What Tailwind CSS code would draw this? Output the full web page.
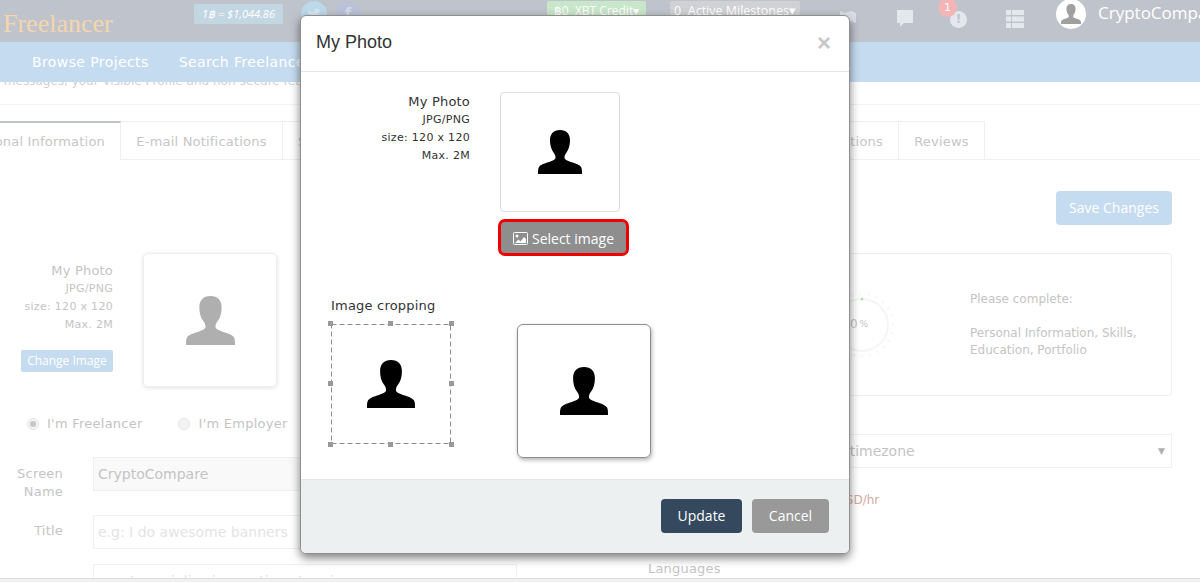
<!DOCTYPE html>
<html lang="en">
<head>
    <meta charset="UTF-8">
    <title>My Photo</title>
    <script src="https://cdn.jsdelivr.net/npm/@tailwindcss/browser@4"></script>
</head>
<body class="bg-white">

    <svg class="hidden">
        <symbol id="person" viewBox="0 0 44 44">
            <path d="M22 0C28.500 0 32 4 32 10C32 15 31 19 28.500 22.500C27 24.500 26.500 26 26.500 27.500C26.500 29.500 29 30.500 33 32C38 33.500 42 35 43 37C44 38.500 44 41 44 44L0 44C0 41 0 38.500 1 37C2 35 6 33.500 11 32C15 30.500 17.500 29.500 17.500 27.500C17.500 26 17 24.500 15.500 22.500C13 19 12 15 12 10C12 4 15.500 0 22 0Z"/>
        </symbol>
    </svg>

    <div class="relative w-[1200px] h-[582px] overflow-hidden font-['DejaVu_Sans',sans-serif]">

        <!-- header -->
        <header class="h-[42px] bg-[#bfc3cb] flex items-start whitespace-nowrap overflow-hidden">
            <span class="shrink-0 ml-[3px] mt-[8px] w-[110px] text-[26px] leading-[32px] text-[#f5d6ac] font-['Liberation_Serif',serif]">Freelancer</span>
            <span class="shrink-0 ml-[81px] mt-[4px] w-[89px] h-[20px] rounded-[2px] bg-[#c3d7e3] text-white text-[11px] italic leading-[20px] text-center font-['Open_Sans',sans-serif]">1฿ = $1,044.86</span>
            <span class="shrink-0 ml-[18px] mt-[1px] w-[26px] h-[26px] rounded-full bg-[#bcd9ea] flex items-center justify-center">
                <svg class="w-[14px] h-[14px]" viewBox="0 0 24 24" fill="#d5e6f0"><path d="M23 5c-.8.4-1.700.6-2.600.7.900-.6 1.600-1.400 2-2.500-.9.500-1.900.9-2.900 1.100A4.600 4.600 0 0 0 11.700 8.500 13 13 0 0 1 2.300 3.700a4.600 4.600 0 0 0 1.400 6.100c-.7 0-1.400-.2-2-.6 0 2.200 1.600 4.100 3.700 4.600-.7.200-1.400.2-2.100.1.600 1.800 2.300 3.100 4.300 3.200A9.300 9.300 0 0 1 1 19a13 13 0 0 0 20-11.600c.9-.6 1.600-1.400 2-2.400z"/></svg>
            </span>
            <span class="shrink-0 ml-[8px] mt-[1px] w-[26px] h-[26px] rounded-full bg-[#b9c2d7] text-[#d3d9e6] text-[15px] font-bold leading-[26px] text-center">f</span>
            <span class="shrink-0 ml-[186px] mt-[1px] w-[99px] h-[21px] rounded-[2px] bg-[#c8e6c9] text-white text-[12px] leading-[19px] text-center font-['Open_Sans',sans-serif]">฿0&nbsp; XBT Credit▾</span>
            <span class="shrink-0 ml-[24px] mt-[1px] w-[130px] h-[21px] rounded-[2px] bg-[#d0d1d4] text-white text-[12.5px] leading-[19px] text-center font-['Open_Sans',sans-serif]">0&nbsp; Active Milestones▾</span>
            <svg class="shrink-0 ml-[39px] mt-[10px] w-[18px] h-[14px]" viewBox="0 0 18 14" fill="#dbe0e8"><path d="M1 1l5 2 6-2 5 2v10l-5-2-6 2-5-2z"/></svg>
            <svg class="shrink-0 ml-[39px] mt-[9px] w-[18px] h-[20px]" viewBox="0 0 18 20" fill="#e4e8ee"><path d="M1 1h16v13H8l-4 4v-4H1z"/></svg>
            <div class="shrink-0 relative ml-[36px] mt-[11px] w-[17px] h-[17px] rounded-full bg-[#e4e8ee] text-[#bfc3cb] text-[12px] font-bold leading-[17px] text-center">!
                <span class="absolute -left-[12px] -top-[13px] w-[19px] h-[19px] rounded-full bg-[#f3b5b5] text-white text-[11px] font-normal leading-[19px]">1</span>
            </div>
            <svg class="shrink-0 ml-[39px] mt-[10px] w-[18px] h-[18px]" viewBox="0 0 18 18" fill="#e4e8ee"><path d="M0 0h5v5H0zM6 0h12v5H6zM0 6.500h5v5H0zM6 6.500h12v5H6zM0 13h5v5H0zM6 13h12v5H6z"/></svg>
            <span class="shrink-0 ml-[32px] -mt-[1px] w-[30px] h-[30px] rounded-full bg-white flex items-center justify-center">
                <svg class="w-[20px] h-[20px] fill-[#a0a0a0]"><use href="#person"/></svg>
            </span>
            <span class="shrink-0 ml-[12px] mt-[2px] text-white text-[17px] leading-[22px] font-['Open_Sans',sans-serif]">CryptoCompare</span>
        </header>

        <!-- nav -->
        <nav class="h-[40px] bg-[#c5dbef] flex items-center text-white text-[14px] font-medium whitespace-nowrap">
            <span class="ml-[32px] tracking-[0.4px]">Browse Projects</span>
            <span class="ml-[30px] tracking-[0.4px]">Search Freelancers</span>
        </nav>

        <div class="h-[23px] border-b border-[#f3f3f3] overflow-hidden">
            <p class="-mt-[10px] text-[12px] text-[#cfcfcf] whitespace-nowrap">&nbsp;messages, your Visible Profile and non-secure features</p>
        </div>

        <!-- tabs -->
        <div class="mt-[16px] h-[39px] border-b border-[#efefef] flex text-[13px] text-[#c6c6c6] tracking-[0.2px] whitespace-nowrap">
            <div class="w-[121px] h-[39px] border-t-2 border-t-[#bfc3cb] border-r border-r-[#efefef] bg-white flex items-center justify-end pt-[1px] pr-[15px] overflow-hidden">Personal Information</div>
            <div class="w-[162px] border-t border-r border-[#efefef] flex items-center justify-center pt-[2px]">E-mail Notifications</div>
            <div class="w-[100px] border-t border-r border-[#efefef] flex items-center pl-[15px] pt-[2px]">Settings</div>
            <div class="w-[516px] border-t border-r border-[#efefef] flex items-center justify-end pt-[2px] pr-[15px]">Notifications</div>
            <div class="w-[86px] border-t border-r border-[#efefef] flex items-center justify-center pt-[2px]">Reviews</div>
        </div>

        <!-- form behind the dialog -->
        <main class="flex">
            <div class="w-[517px] pt-[93px] shrink-0">
                <div class="flex">
                    <div class="w-[113px] pt-[9px] text-right text-[11px] tracking-[0.3px] leading-[18px] text-[#c4c4c4] whitespace-nowrap">
                        <p class="text-[13px] tracking-[0.2px]">My Photo</p>
                        <p>JPG/PNG</p>
                        <p>size: 120 x 120</p>
                        <p>Max. 2M</p>
                        <span class="inline-block mt-[16px] w-[92px] h-[22px] rounded-[2px] bg-[#c5dbef] text-white text-center text-[12px] tracking-normal leading-[22px] font-['Open_Sans',sans-serif]">Change Image</span>
                    </div>
                    <div class="ml-[30px] w-[134px] h-[134px] rounded-[5px] border border-[#eeeeee] shadow-[0_1px_4px_rgba(0,0,0,0.12)] flex items-center justify-center">
                        <svg class="w-[49px] h-[49px] fill-[#afafaf]"><use href="#person"/></svg>
                    </div>
                </div>
                <div class="mt-[27px] h-[20px] flex items-center text-[13px] text-[#c4c4c4] tracking-[0.25px] whitespace-nowrap">
                    <span class="ml-[27px] w-[12px] h-[12px] rounded-full border border-[#e4e4e4] bg-[#f4f4f4] flex items-center justify-center"><span class="w-[6px] h-[6px] rounded-full bg-[#c8c8c8]"></span></span>
                    <span class="ml-[8px]">I'm Freelancer</span>
                    <span class="ml-[35px] w-[12px] h-[12px] rounded-full border border-[#e4e4e4] bg-[#f4f4f4]"></span>
                    <span class="ml-[9px]">I'm Employer</span>
                </div>
                <div class="mt-[23px] h-[34px] flex items-start">
                    <label class="w-[63px] pt-[8px] text-right text-[13px] tracking-[0.2px] leading-[18px] text-[#c4c4c4]">Screen<br>Name</label>
                    <div class="ml-[30px] flex-1 h-[34px] border border-[#f0f0f0] bg-[#f9f9f9] px-[4px] text-[14px] leading-[33px] text-[#c4c4c4]">CryptoCompare</div>
                </div>
                <div class="mt-[24px] h-[34px] flex items-start">
                    <label class="w-[63px] pt-[7px] text-right text-[13px] tracking-[0.2px] leading-[18px] text-[#c4c4c4]">Title</label>
                    <div class="ml-[30px] flex-1 h-[34px] border border-[#f0f0f0] px-[4px] text-[14px] leading-[33px] text-[#e4e4e4]">e.g: I do awesome banners</div>
                </div>
                <div class="mt-[15px] ml-[93px] h-[34px] border border-[#f0f0f0] px-[36px] text-[14px] leading-[32px] text-[#e4e4e4] whitespace-nowrap">I specialize in creating stunning</div>
            </div>

            <div class="relative flex-1 min-w-0 pt-[31px] pr-[28px] flex flex-col">
                <span class="self-end w-[116px] h-[34px] rounded-[4px] bg-[#c5dbef] text-white text-center text-[14px] leading-[34px] font-['Open_Sans',sans-serif]">Save Changes</span>
                <div class="mt-[28px] h-[143px] rounded-[4px] border border-[#eeeeee] flex items-center text-[12px] leading-[17px] text-[#c4c4c4]">
                    <div class="relative ml-[307px] w-[74px] h-[74px] shrink-0">
                        <svg class="w-[74px] h-[74px]" viewBox="0 0 74 74" fill="none">
                            <circle cx="37" cy="37" r="26" stroke="#f5f5f5" stroke-width="2"/>
                            <circle cx="37" cy="37" r="31" stroke="#f2f2f2" stroke-width="3" stroke-dasharray="1 7"/>
                            <circle cx="37" cy="11" r="1.500" fill="#b8e0b8"/>
                        </svg>
                        <span class="absolute inset-0 pr-[6px] flex items-center justify-center text-[12px]">0<span class="text-[9px] ml-[2px]">%</span></span>
                    </div>
                    <div class="ml-[71px]">
                        <p>Please complete:</p>
                        <p class="mt-[17px] whitespace-nowrap">Personal Information, Skills,<br>Education, Portfolio</p>
                    </div>
                </div>
                <div class="mt-[38px] h-[34px] border border-[#f0f0f0] flex items-center justify-between pl-[284px] pr-[6px] pt-[1px] text-[14px] text-[#c4c4c4]">
                    <span>Select timezone</span><span class="text-[9px] text-[#b0b0b0]">▼</span>
                </div>
                <p class="mt-[23px] pl-[320px] text-[12px] leading-[18px] text-[#d4a9a0]">USD/hr</p>
                <p class="mt-[50px] pl-[131px] text-[13px] tracking-[0.2px] text-[#c4c4c4]">Languages</p>
            </div>
        </main>

        <!-- bottom scrollbar strip -->
        <div class="absolute left-0 right-0 bottom-0 h-[4px] bg-[#f1f1f1] border-t border-[#dcdcdc]"></div>

        <!-- dialog -->
        <div class="absolute left-[300px] top-[15px] w-[550px] h-[539px] rounded-[6px] bg-white border border-[#8f8f8f] shadow-[0_4px_10px_rgba(0,0,0,0.5)] flex flex-col overflow-hidden">
            <div class="h-[56px] shrink-0 border-b border-[#e5e5e5] flex items-center justify-between pl-[15px] pr-[18px] pb-[2px]">
                <h4 class="text-[18px] text-[#333] font-['Liberation_Sans',sans-serif]">My Photo</h4>
                <span class="text-[#c8c8c8] text-[24px] leading-[24px] font-bold font-['Liberation_Sans',sans-serif]">×</span>
            </div>

            <div class="flex-1 relative">
                <div class="flex pt-[20px]">
                    <div class="w-[169px] pt-[1px] text-right text-[11px] tracking-[0.3px] leading-[18px] text-[#333] whitespace-nowrap">
                        <p class="text-[13px] tracking-[0.2px]">My Photo</p>
                        <p>JPG/PNG</p>
                        <p>size: 120 x 120</p>
                        <p>Max. 2M</p>
                    </div>
                    <div class="ml-[30px]">
                        <div class="w-[120px] h-[120px] rounded-[4px] border border-[#dddddd] flex items-center justify-center">
                            <svg class="w-[44px] h-[44px] fill-black"><use href="#person"/></svg>
                        </div>
                        <div class="mt-[7px] -ml-[2px] w-[131px] h-[37px] rounded-[7px] border-[3px] border-[#f00000] bg-[#8e8e8e] text-white flex items-center justify-center gap-[4px] pt-[1px] text-[14px] font-['Open_Sans',sans-serif]">
                            <svg class="w-[15px] h-[13px]" viewBox="0 0 15 13" fill="none"><rect x="0.500" y="0.500" width="14" height="12" rx="1" stroke="white"/><circle cx="4" cy="4" r="1.500" fill="white"/><path d="M2 11l3.500-3.500 2 2L11 5l2 2v4z" fill="white"/></svg>
                            <span>Select image</span>
                        </div>
                    </div>
                </div>

                <p class="mt-[42px] ml-[30px] text-[13px] leading-[16px] text-[#333] tracking-[0.2px]">Image cropping</p>

                <div class="mt-[10px] ml-[30px] flex items-start">
                    <div class="relative w-[120px] h-[120px] flex items-center justify-center">
                        <svg class="absolute inset-0 w-[120px] h-[120px]" viewBox="0 0 120 120" fill="none"><rect x="0.500" y="0.500" width="119" height="119" stroke="#8e8e8e" stroke-dasharray="5 3"/></svg>
                        <svg class="w-[48px] h-[48px] fill-black"><use href="#person"/></svg>
                        <span class="absolute -left-[3px] -top-[3px] w-[5px] h-[5px] bg-[#999]"></span>
                        <span class="absolute left-[57px] -top-[3px] w-[5px] h-[5px] bg-[#999]"></span>
                        <span class="absolute -right-[3px] -top-[3px] w-[5px] h-[5px] bg-[#999]"></span>
                        <span class="absolute -left-[3px] top-[57px] w-[5px] h-[5px] bg-[#999]"></span>
                        <span class="absolute -right-[3px] top-[57px] w-[5px] h-[5px] bg-[#999]"></span>
                        <span class="absolute -left-[3px] -bottom-[3px] w-[5px] h-[5px] bg-[#999]"></span>
                        <span class="absolute left-[57px] -bottom-[3px] w-[5px] h-[5px] bg-[#999]"></span>
                        <span class="absolute -right-[3px] -bottom-[3px] w-[5px] h-[5px] bg-[#999]"></span>
                    </div>
                    <div class="ml-[66px] w-[134px] h-[134px] rounded-[6px] border border-[#8e8e8e] shadow-[1px_2px_4px_rgba(0,0,0,0.3)] flex items-center justify-center">
                        <svg class="w-[48px] h-[48px] fill-black"><use href="#person"/></svg>
                    </div>
                </div>
            </div>

            <div class="h-[74px] shrink-0 bg-[#ecf0f1] border-t border-[#e5e5e5] flex items-center justify-end gap-[10px] pr-[20px] pb-[2px] text-[14px] font-medium text-white font-['Open_Sans',sans-serif]">
                <span class="w-[81px] h-[34px] rounded-[4px] bg-[#34495e] text-center leading-[34px]">Update</span>
                <span class="w-[77px] h-[34px] rounded-[4px] bg-[#999999] text-center leading-[34px]">Cancel</span>
            </div>
        </div>
    </div>

</body>
</html>
